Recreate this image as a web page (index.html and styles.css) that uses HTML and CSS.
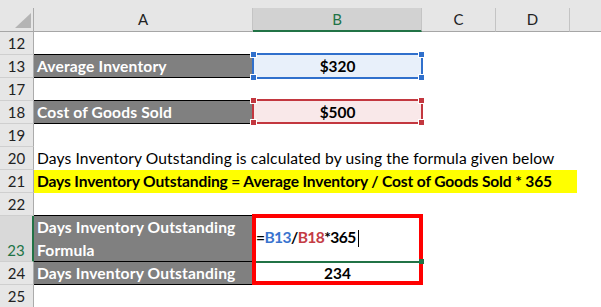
FILE: index.html
```html
<!DOCTYPE html>
<html>
<head>
<meta charset="utf-8">
<link rel="stylesheet" href="styles.css">
</head>
<body>
<div class="sheet">
  <div class="topbar"></div>
  <div class="row hdr">
    <div class="corner"><svg class="tri" width="16" height="15" viewBox="0 0 16 15"><polygon points="0,15 16,15 16,0" fill="#b4b4b4"/></svg></div>
    <div class="ch ca">A</div>
    <div class="ch cb sel">B</div>
    <div class="ch cc">C</div>
    <div class="ch cd">D</div>
    <div class="ch ce"></div>
  </div>
  <div class="row"><div class="rh">12</div></div>
  <div class="row"><div class="rh">13</div><div class="c ca lbl">Average Inventory</div><div class="c cb val blue">$320</div></div>
  <div class="row"><div class="rh">17</div></div>
  <div class="row"><div class="rh">18</div><div class="c ca lbl">Cost of Goods Sold</div><div class="c cb val pink">$500</div></div>
  <div class="row"><div class="rh">19</div></div>
  <div class="row"><div class="rh">20</div><div class="c ca txt">Days Inventory Outstanding is calculated by using the formula given below</div></div>
  <div class="row"><div class="rh">21</div><div class="c ca nopad"><div class="hl">Days Inventory Outstanding = Average Inventory / Cost of Goods Sold * 365</div></div></div>
  <div class="row"><div class="rh">22</div></div>
  <div class="row tall"><div class="rh sel">23</div><div class="c ca lbl wrap">Days Inventory Outstanding Formula</div><div class="c cb fx"><span>=</span><span class="r1">B13</span><span>/</span><span class="r2">B18</span><span>*365</span><span class="caret"></span></div></div>
  <div class="row"><div class="rh">24</div><div class="c ca lbl notop">Days Inventory Outstanding</div><div class="c cb val">234</div></div>
  <div class="row"><div class="rh">25</div></div>

  <div class="ref ref-blue"><i class="hd tl"></i><i class="hd tr"></i><i class="hd bl"></i><i class="hd br"></i></div>
  <div class="ref ref-red"><i class="hd tl"></i><i class="hd tr"></i><i class="hd bl"></i><i class="hd br"></i></div>
  <div class="cursorline"></div>
  <div class="redbox"></div>
  <div class="fillhandle"></div>
</div>
</body>
</html>
```

FILE: styles.css
```css
body {
  margin: 0;
  background: #fff;
}
.sheet {
  position: relative;
  width: 601px;
  height: 307px;
  overflow: hidden;
  background: #fff;
  font-family: Lato, "Open Sans", sans-serif;
  font-size: 15.6px;
  color: #000;
}
.topbar {
  height: 8px;
  background: #e6e6e6;
}
.row {
  display: flex;
  height: 23px;
}
.row.tall {
  height: 46px;
}
.hdr {
  height: 24px;
  background: #e6e6e6;
}
.corner {
  width: 34px;
  flex: none;
  box-sizing: border-box;
  border-right: 1px solid #ababab;
  border-bottom: 1px solid #a6a6a6;
  display: flex;
  justify-content: flex-end;
  align-items: flex-end;
  padding: 0 2px 3px 0;
}
.tri {
  display: block;
}
.ch {
  flex: none;
  box-sizing: border-box;
  border-right: 1px solid #c4c4c4;
  border-bottom: 1px solid #a6a6a6;
  text-align: center;
  line-height: 23px;
  font-size: 15px;
  color: #222;
}
.ch.sel {
  background: #d2d2d2;
  color: #217346;
  border-bottom: 2px solid #217346;
}
.ca { width: 219px; }
.cb { width: 169px; }
.cc, .cd { width: 74px; }
.ce { flex: 1; border-right: none; }

.rh {
  width: 34px;
  flex: none;
  box-sizing: border-box;
  background: #e6e6e6;
  border-right: 1px solid #ababab;
  border-bottom: 1px solid #cfcfcf;
  display: flex;
  align-items: flex-end;
  justify-content: center;
  line-height: 22px;
  font-size: 15px;
  color: #222;
}
.rh.sel {
  background: #d9d9d9;
  color: #217346;
  border-right: 2px solid #217346;
}
.c {
  flex: none;
  box-sizing: border-box;
  line-height: 22px;
  white-space: nowrap;
  padding: 0 3px;
}
.txt {
  letter-spacing: 0.12px;
}
.nopad {
  padding: 0;
}
.lbl {
  background: #808080;
  color: #fff;
  font-weight: bold;
  letter-spacing: 0.15px;
  border-top: 1px solid #000;
  border-bottom: 1px solid #000;
  margin-top: -1px;
}
.lbl.notop {
  border-top: none;
  margin-top: 0;
}
.lbl.wrap {
  white-space: normal;
  line-height: 22.5px;
}
.val {
  text-align: center;
  font-weight: bold;
  font-size: 15.4px;
}
.blue { background: #e8f0fa; }
.pink { background: #f9e8e9; }
.hl {
  width: 543px;
  height: 23px;
  box-sizing: border-box;
  padding-left: 3px;
  background: #ffff00;
  font-weight: bold;
  letter-spacing: -0.15px;
}
.fx {
  font-weight: bold;
  display: flex;
  align-items: center;
  padding-bottom: 4px;
  letter-spacing: -0.6px;
}
.r1 { color: #3a74cf; }
.r2 { color: #c43c45; }
.caret {
  display: inline-block;
  width: 1px;
  height: 17px;
  background: #000;
  margin-left: 2px;
  margin-top: 2px;
}

.ref {
  position: absolute;
  left: 252px;
  width: 171px;
  box-sizing: border-box;
}
.ref-blue {
  top: 53px;
  height: 26px;
  border: 2px solid #3070cc;
}
.ref-red {
  top: 99px;
  height: 25px;
  border: 2px solid #c3373f;
}
.hd {
  position: absolute;
  width: 7px;
  height: 7px;
  box-sizing: border-box;
  border: 1px solid #fff;
}
.ref-blue .hd { background: #3070cc; }
.ref-red .hd { background: #c3373f; }
.hd.tl { left: -4px; top: -4px; }
.hd.tr { right: -4px; top: -4px; }
.hd.bl { left: -4px; bottom: -4px; }
.hd.br { right: -4px; bottom: -4px; }

.redbox {
  position: absolute;
  left: 252px;
  top: 214px;
  width: 171px;
  height: 71px;
  box-sizing: border-box;
  border: 4px solid #ff0000;
}
.cursorline {
  position: absolute;
  left: 256px;
  top: 261px;
  width: 163px;
  height: 2px;
  background: #217346;
}
.fillhandle {
  position: absolute;
  left: 419px;
  top: 259px;
  width: 5px;
  height: 5px;
  background: #217346;
}
```
